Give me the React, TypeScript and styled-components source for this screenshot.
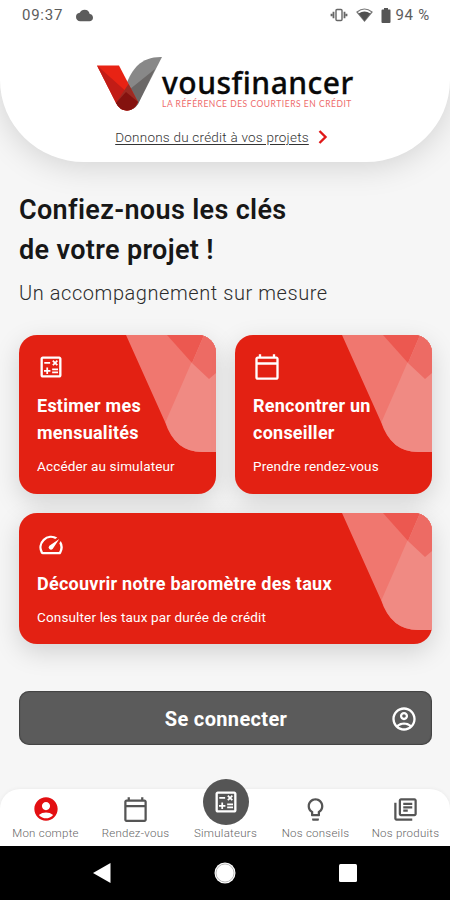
import React from 'react';
import styled, { createGlobalStyle } from 'styled-components';
import {
  MdAccountCircle,
  MdCloud,
  MdLightbulbOutline,
  MdOutlineAccountCircle,
  MdOutlineCalculate,
  MdOutlineCalendarToday,
  MdOutlineLibraryBooks,
  MdOutlineSpeed,
} from 'react-icons/md';

const GlobalStyle = createGlobalStyle`
  * { box-sizing: border-box; }
  body { margin: 0; background: #f6f6f6; font-family: Roboto, "Liberation Sans", sans-serif; }
  svg { display: block; flex: none; }
`;

const Screen = styled.div`
  width: 450px;
  height: 900px;
  display: flex;
  flex-direction: column;
  overflow: hidden;
  background: #f6f6f6;
`;

const Header = styled.header`
  height: 162px;
  flex: none;
  display: flex;
  flex-direction: column;
  align-items: center;
  background: #fff;
  border-radius: 0 0 84px 84px / 0 0 82px 82px;
  box-shadow: 0 4px 32px rgba(0, 0, 0, 0.15);
`;

const StatusBar = styled.div`
  width: 100%;
  height: 30px;
  padding: 0 20px 0 22px;
  display: flex;
  align-items: center;
  color: #5c5c5c;
  font-size: 15px;
  letter-spacing: 0.75px;
`;

const Clock = styled.span`
  flex: 1;
  display: flex;
  align-items: center;
  gap: 13px;
`;

const StatusIcons = styled.span`
  display: flex;
  align-items: center;
  gap: 8px;
  margin-right: 4px;
`;

const Brand = styled.div`
  width: 260px;
  height: 58px;
  margin: 25px 0 0 2px;
  display: flex;
`;

const BrandText = styled.div`
  display: flex;
  flex-direction: column;
  padding-top: 15px;
`;

const Wordmark = styled.span`
  font: 500 30px/26px "Noto Sans", sans-serif;
  font-variant-ligatures: none;
  letter-spacing: 0.5px;
  -webkit-text-stroke: 0.3px #090909;
  color: #090909;
  white-space: nowrap;
`;

const Tagline = styled.span`
  margin-top: 4px;
  font: 400 8.5px/9px Lato, sans-serif;
  letter-spacing: 0.52px;
  color: #ee6b6b;
  white-space: nowrap;
`;

const HeaderLink = styled.a`
  display: flex;
  align-items: center;
  gap: 9px;
  margin: 15px 0 0 -7px;
  height: 18px;
  font-size: 13.5px;
  font-weight: 300;
  color: #333;
  white-space: nowrap;
`;

const LinkText = styled.span`
  text-decoration: underline;
  text-underline-offset: 2px;
  letter-spacing: 0.23px;
`;

const Main = styled.main`
  flex: 1;
  padding: 28px 18px 0 19px;
`;

const Title = styled.h1`
  margin: 0;
  font-size: 27px;
  line-height: 40px;
  font-weight: 600;
  letter-spacing: 0.34px;
  color: #171717;
`;

const Subtitle = styled.p`
  margin: 10px 0 0;
  font-size: 20px;
  line-height: 26px;
  font-weight: 300;
  letter-spacing: 0.57px;
  color: #2c2c2c;
`;

const Cards = styled.div`
  display: grid;
  grid-template-columns: 197px 197px;
  gap: 19px;
  margin-top: 29px;
`;

const CardBox = styled.section<{ $wide?: boolean }>`
  position: relative;
  height: ${(p) => (p.$wide ? 131 : 159)}px;
  grid-column: ${(p) => (p.$wide ? '1 / -1' : 'auto')};
  padding: 18px;
  border-radius: 18px;
  color: #fff;
  background: #e32113;
  box-shadow: 0 8px 26px rgba(0, 0, 0, 0.15);
`;

const Watermark = styled.svg`
  position: absolute;
  top: 0;
  right: 0;
  border-top-right-radius: 18px;
`;

const CardContent = styled.div`
  position: relative;
  display: flex;
  flex-direction: column;
`;

const CardTitle = styled.h2`
  margin: 11px 0 0;
  font-size: 18px;
  line-height: 27px;
  font-weight: 700;
  letter-spacing: 0.25px;
  white-space: pre-line;
`;

const CardNote = styled.p`
  margin: 11px 0 0;
  font-size: 13.5px;
  line-height: 18px;
  letter-spacing: 0.15px;
  white-space: nowrap;
`;

const LoginButton = styled.button`
  width: 413px;
  height: 54px;
  margin-top: 47px;
  padding: 2px 14px 0 43px;
  display: flex;
  align-items: center;
  border: 0;
  border-radius: 10px;
  background: #5b5b5b;
  box-shadow: inset 0 0 1px 1px rgba(45, 45, 45, 0.55);
  color: #fff;
  font: 700 20px/26px Roboto, sans-serif;
  letter-spacing: 0.35px;
`;

const LoginLabel = styled.span`
  flex: 1;
  text-align: center;
`;

const Tabs = styled.nav`
  flex: none;
  height: 57px;
  display: grid;
  grid-template-columns: repeat(5, 1fr);
  grid-template-rows: 57px;
  background: #fff;
  border-radius: 20px 20px 0 0;
  box-shadow: 0 0 4px rgba(0, 0, 0, 0.06);
`;

const Tab = styled.div<{ $active?: boolean }>`
  display: flex;
  flex-direction: column;
  align-items: center;
  justify-content: flex-end;
  padding: 0 0 6px 1px;
  color: ${(p) => (p.$active ? '#e30f12' : '#555')};
`;

const TabLabel = styled.span`
  margin-top: 3px;
  font-size: 11.5px;
  line-height: 14px;
  font-weight: 300;
  letter-spacing: 0.25px;
  color: #666;
  white-space: nowrap;
`;

const RaisedIcon = styled.span`
  width: 46px;
  height: 46px;
  margin-bottom: -2px;
  display: flex;
  flex: none;
  align-items: center;
  justify-content: center;
  border-radius: 50%;
  background: #555;
  color: #fff;
`;

const SystemBar = styled.footer`
  flex: none;
  height: 54px;
  padding: 0 92px;
  display: flex;
  align-items: center;
  justify-content: space-between;
  background: #000;
`;

function BrandLogo() {
  return (
    <svg width="66" height="58" viewBox="96 55 66 58">
      <path d="M126 85C132 69 141 56.500 162 57L138 104Q134 110 129 110Z" fill="#888" />
      <path d="M155 69L138 104Q134 110 127 110L119 98Z" fill="#6b6867" />
      <path d="M97 65.500H119L138 102Q134 110.500 127 110.500Q120 110.500 116 103Z" fill="#e82314" />
      <path d="M97 65.500L138 102Q134 110.500 127 110.500Q120 110.500 116 103Z" fill="#c21c16" />
      <path d="M128.500 84L138 102Q134 110.500 127 110.500Q120 110.500 116 103Z" fill="#9c2a22" />
      <path d="M126 92L138 102Q134 110.500 127 110.500Q120 110.500 116 103Z" fill="#84120f" />
    </svg>
  );
}

function VibrateIcon() {
  return (
    <svg width="18" height="14" viewBox="0 0 18 14" fill="none" stroke="#666" strokeWidth="1.400">
      <rect x="6" y="1.500" width="6" height="11" rx="1" />
      <path d="M3.500 3.800v6.400M14.500 3.800v6.400M1.500 5.800v2.400M16.500 5.800v2.400" strokeWidth="1.800" />
    </svg>
  );
}

function WifiIcon() {
  return (
    <svg width="17" height="14" viewBox="0 0 17 14">
      <path d="M1 4Q8.500-2 16 4L8.500 13Z" fill="none" stroke="#777" strokeWidth="1.200" />
      <path d="M2.600 5.600Q8.500 1.500 14.400 5.600L8.500 13Z" fill="#505050" />
    </svg>
  );
}

function BatteryIcon() {
  return (
    <svg width="10" height="15" viewBox="0 0 10 15">
      <path d="M3 0h4v1.500h2Q9.500 1.500 9.500 2.500V14Q9.500 15 8.500 15H1.500Q.5 15 .5 14V2.500Q.5 1.500 1.500 1.500H3Z" fill="#555" />
    </svg>
  );
}

interface CardProps {
  icon: React.ReactNode;
  title: string;
  note: string;
  wide?: boolean;
}

function Card({ icon, title, note, wide }: CardProps) {
  return (
    <CardBox $wide={wide}>
      <Watermark width="90" height="118" viewBox="0 0 90 118">
        <path d="M0 0H90V117H76Q49 117 39 87Z" fill="#f0776f" />
        <path d="M77.500 0H90V117H76Q49 117 39.500 87Z" fill="#f08a83" />
        <path d="M41 0H78L66 28Z" fill="#ec5850" />
        <path d="M78 0H90V38L83 44L66 28Z" fill="#ed6b64" />
      </Watermark>
      <CardContent>
        {icon}
        <CardTitle>{title}</CardTitle>
        <CardNote>{note}</CardNote>
      </CardContent>
    </CardBox>
  );
}

export default function App() {
  return (
    <Screen>
      <GlobalStyle />
      <Header>
        <StatusBar>
          <Clock>09:37 <MdCloud size={17} /></Clock>
          <StatusIcons><VibrateIcon /><WifiIcon /><BatteryIcon /></StatusIcons>
          94 %
        </StatusBar>
        <Brand>
          <BrandLogo />
          <BrandText>
            <Wordmark>vousfinancer</Wordmark>
            <Tagline>LA RÉFÉRENCE DES COURTIERS EN CRÉDIT</Tagline>
          </BrandText>
        </Brand>
        <HeaderLink>
          <LinkText>Donnons du crédit à vos projets</LinkText>
          <svg width="10" height="14" viewBox="0 0 10 14" fill="none" stroke="#e01818" strokeWidth="2.400">
            <path d="M1.500 1L7.500 7L1.500 13" />
          </svg>
        </HeaderLink>
      </Header>
      <Main>
        <Title>Confiez-nous les clés<br />de votre projet !</Title>
        <Subtitle>Un accompagnement sur mesure</Subtitle>
        <Cards>
          <Card icon={<MdOutlineCalculate size={28} />} title={'Estimer mes\nmensualités'} note="Accéder au simulateur" />
          <Card icon={<MdOutlineCalendarToday size={28} />} title={'Rencontrer un\nconseiller'} note="Prendre rendez-vous" />
          <Card wide icon={<MdOutlineSpeed size={28} />} title="Découvrir notre baromètre des taux" note="Consulter les taux par durée de crédit" />
        </Cards>
        <LoginButton>
          <LoginLabel>Se connecter</LoginLabel>
          <MdOutlineAccountCircle size={28} />
        </LoginButton>
      </Main>
      <Tabs>
        <Tab $active><MdAccountCircle size={28} /><TabLabel>Mon compte</TabLabel></Tab>
        <Tab><MdOutlineCalendarToday size={27} /><TabLabel>Rendez-vous</TabLabel></Tab>
        <Tab>
          <RaisedIcon><MdOutlineCalculate size={28} /></RaisedIcon>
          <TabLabel>Simulateurs</TabLabel>
        </Tab>
        <Tab><MdLightbulbOutline size={27} /><TabLabel>Nos conseils</TabLabel></Tab>
        <Tab><MdOutlineLibraryBooks size={27} /><TabLabel>Nos produits</TabLabel></Tab>
      </Tabs>
      <SystemBar>
        <svg width="20" height="22" viewBox="0 0 20 22"><path d="M1 11L18.500 1V21Z" fill="#fff" /></svg>
        <svg width="24" height="24" viewBox="0 0 24 24">
          <circle cx="12" cy="12" r="10.500" fill="#fff" />
          <circle cx="12" cy="12" r="9" fill="none" stroke="#aaa" strokeWidth="0.800" />
        </svg>
        <svg width="20" height="20" viewBox="0 0 20 20"><rect x="1" y="1" width="18" height="18" rx="1.500" fill="#fff" /></svg>
      </SystemBar>
    </Screen>
  );
}
